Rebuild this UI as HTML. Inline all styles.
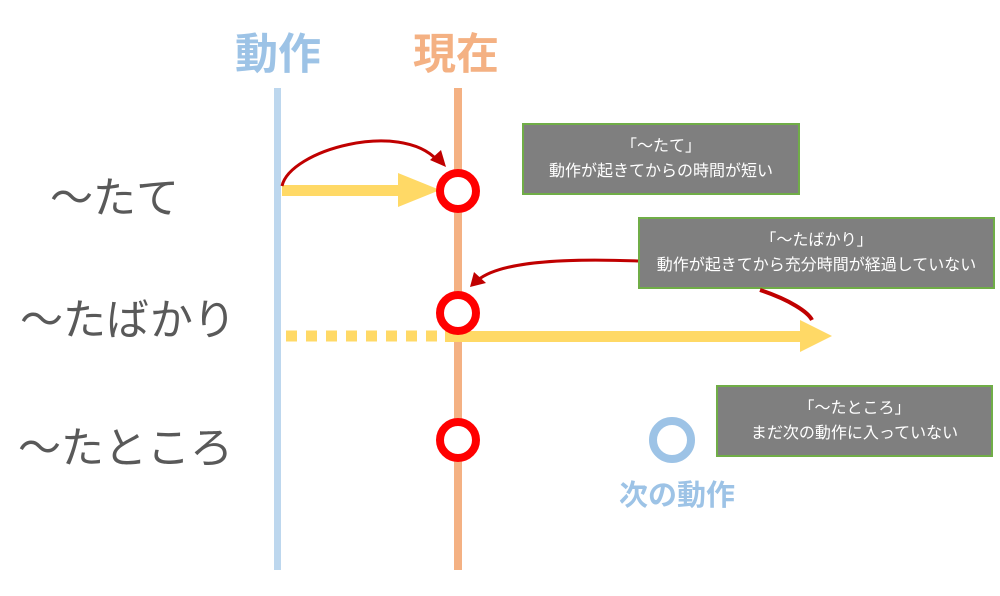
<!DOCTYPE html>
<html><head><meta charset="utf-8"><style>
body{margin:0;width:1000px;height:596px;background:#fff;position:relative;overflow:hidden;font-family:"Liberation Sans","Noto Sans CJK JP",sans-serif}
.t{position:absolute;white-space:nowrap}
.box{position:absolute;background:#7f7f7f;border:2px solid #70ad47;color:#fff;font-size:16px;text-align:center;line-height:25px;box-sizing:border-box;display:flex;flex-direction:column;justify-content:center}
.lab{font-size:43px;color:#595959}
</style></head><body>
<div class="t" style="left:235px;top:20px;font-size:43px;font-weight:bold;color:#9dc3e6">動作</div>
<div class="t" style="left:413px;top:20px;font-size:43px;font-weight:bold;color:#f4b183">現在</div>
<div class="t lab" style="left:50px;top:164px">～たて</div>
<div class="t lab" style="left:20px;top:286px">～たばかり</div>
<div class="t lab" style="left:18px;top:414px">～たところ</div>
<div class="t" style="left:619px;top:472px;font-size:29px;font-weight:bold;color:#9dc3e6">次の動作</div>
<div class="box" style="left:522px;top:123px;width:278px;height:72px"><div>「～たて」</div><div>動作が起きてからの時間が短い</div></div>
<div class="box" style="left:638px;top:217px;width:357px;height:72px"><div>「～たばかり」</div><div>動作が起きてから充分時間が経過していない</div></div>
<div class="box" style="left:716px;top:385px;width:277px;height:72px"><div>「～たところ」</div><div>まだ次の動作に入っていない</div></div>
<svg width="1000" height="596" style="position:absolute;left:0;top:0">
<rect x="274" y="88" width="7" height="482" fill="#bdd7ee"/>
<rect x="454" y="88" width="8" height="482" fill="#f4b183"/>
<rect x="282" y="185" width="118" height="11" fill="#ffd966"/>
<polygon points="398,173 440,190 398,207" fill="#ffd966"/>
<line x1="286" y1="336" x2="445" y2="336" stroke="#ffd966" stroke-width="11" stroke-dasharray="11,9"/>
<rect x="445" y="331" width="360" height="11" fill="#ffd966"/>
<polygon points="800,320 832,336 800,352" fill="#ffd966"/>
<circle cx="458" cy="191" r="18" fill="#fff" stroke="#ff0000" stroke-width="8"/>
<circle cx="458" cy="313" r="18" fill="#fff" stroke="#ff0000" stroke-width="8"/>
<circle cx="458" cy="440" r="18" fill="#fff" stroke="#ff0000" stroke-width="8"/>
<circle cx="672" cy="440" r="19" fill="#fff" stroke="#9dc3e6" stroke-width="8"/>
<path d="M282,186 C290,150 400,120 437,160" fill="none" stroke="#c00000" stroke-width="3"/>
<polygon points="430,160 446,167 441,150" fill="#c00000"/>
<path d="M638,261 C560,258 500,262 478,280" fill="none" stroke="#c00000" stroke-width="3"/>
<polygon points="470,287 486,283 474,272" fill="#c00000"/>
<path d="M760,290 C790,300 808,312 812,320" fill="none" stroke="#c00000" stroke-width="4"/>
</svg>
</body></html>
